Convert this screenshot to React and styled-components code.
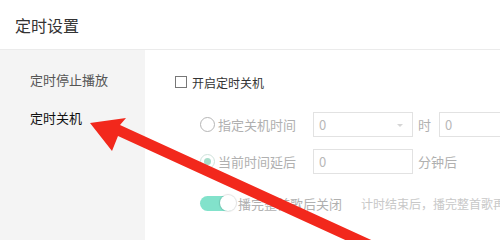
import React from "react";
import styled, { createGlobalStyle } from "styled-components";

const GlobalStyle = createGlobalStyle`
  html, body {
    margin: 0;
    padding: 0;
    background: #fff;
  }
  body {
    font-family: "Noto Sans CJK SC", "Noto Sans", sans-serif;
  }
`;

const Page = styled.div`
  position: relative;
  width: 500px;
  height: 240px;
  overflow: hidden;
  background: #fff;
`;

const Header = styled.div`
  height: 49px;
  border-bottom: 1px solid #ebebeb;
  display: flex;
  align-items: center;
  padding-left: 15px;
  font-size: 16px;
  color: #333;
`;

const Body = styled.div`
  display: flex;
  height: 190px;
`;

const Sidebar = styled.div`
  width: 145px;
  flex-shrink: 0;
  background: #f4f4f4;
  padding-top: 20px;
  box-sizing: border-box;
`;

const SideItem = styled.div`
  height: 20px;
  line-height: 20px;
  padding-left: 30px;
  margin-bottom: 18px;
  font-size: 13px;
  color: ${(p) => (p.$active ? "#111" : "#555")};
`;

const Content = styled.div`
  flex: 1;
  padding: 22px 0 0 30px;
  white-space: nowrap;
`;

const CheckRow = styled.div`
  display: flex;
  align-items: center;
  height: 20px;
  gap: 5px;
  font-size: 12px;
  color: #333;
`;

const CheckBox = styled.span`
  width: 10px;
  height: 10px;
  border: 1px solid #777;
  background: #fff;
`;

const Options = styled.div`
  padding-left: 25px;
  margin-top: 20px;
  display: flex;
  flex-direction: column;
`;

const Row = styled.div`
  display: flex;
  align-items: center;
  height: 25px;
  margin-bottom: ${(p) => p.$gap || 0}px;
  font-size: 13px;
  color: #b0b0b0;
`;

const Radio = styled.span`
  width: 13px;
  height: 13px;
  border-radius: 50%;
  border: 1px solid ${(p) => (p.$checked ? "#cfe3db" : "#b5b5b5")};
  display: flex;
  align-items: center;
  justify-content: center;
  margin-right: 3px;
  flex-shrink: 0;
  &::after {
    content: "";
    display: ${(p) => (p.$checked ? "block" : "none")};
    width: 7px;
    height: 7px;
    border-radius: 50%;
    background: #a6dcc9;
  }
`;

const Label = styled.span`
  width: 95px;
`;

const Input = styled.div`
  position: relative;
  width: ${(p) => p.$w || 100}px;
  height: ${(p) => p.$h || 25}px;
  box-sizing: border-box;
  border: 1px solid #e2e2e2;
  padding-left: 5px;
  display: flex;
  align-items: center;
  font-size: 13px;
  color: #b8b8b8;
  flex-shrink: 0;
`;

const Caret = styled.span`
  position: absolute;
  right: 9px;
  top: 11px;
  width: 0;
  height: 0;
  border-left: 3px solid transparent;
  border-right: 3px solid transparent;
  border-top: 3px solid #d5d5d5;
`;

const Unit = styled.span`
  margin: 0 ${(p) => p.$right || 0}px 0 5px;
`;

const Toggle = styled.span`
  position: relative;
  width: 35px;
  height: 15px;
  border-radius: 8px;
  background: #82e2cb;
  margin-right: 3px;
  flex-shrink: 0;
  &::after {
    content: "";
    position: absolute;
    right: -1px;
    top: -1px;
    width: 16px;
    height: 16px;
    border-radius: 50%;
    background: #fff;
    box-shadow: 0 0 1px 1px rgba(0, 0, 0, 0.12);
  }
`;

const Hint = styled.span`
  margin-left: 19px;
  font-size: 12px;
  color: #c8c8c8;
`;

const ArrowLayer = styled.svg`
  position: absolute;
  left: 0;
  top: 0;
  pointer-events: none;
`;

export default function App() {
  return (
    <Page>
      <GlobalStyle />
      <Header>定时设置</Header>
      <Body>
        <Sidebar>
          <SideItem>定时停止播放</SideItem>
          <SideItem $active>定时关机</SideItem>
        </Sidebar>
        <Content>
          <CheckRow>
            <CheckBox />
            开启定时关机
          </CheckRow>
          <Options>
            <Row $gap={12}>
              <Radio />
              <Label>指定关机时间</Label>
              <Input>
                0
                <Caret />
              </Input>
              <Unit $right={8}>时</Unit>
              <Input>0</Input>
            </Row>
            <Row $gap={17}>
              <Radio $checked />
              <Label>当前时间延后</Label>
              <Input>0</Input>
              <Unit>分钟后</Unit>
            </Row>
            <Row>
              <Toggle />
              <span>播完整首歌后关闭</span>
              <Hint>计时结束后，播完整首歌再关闭</Hint>
            </Row>
          </Options>
        </Content>
      </Body>
      <ArrowLayer width="500" height="240" viewBox="0 0 500 240">
        <polygon
          points="90,123 126,118 120,125 380,244 354,244 118,136 112,151"
          fill="#f2281c"
        />
      </ArrowLayer>
    </Page>
  );
}
